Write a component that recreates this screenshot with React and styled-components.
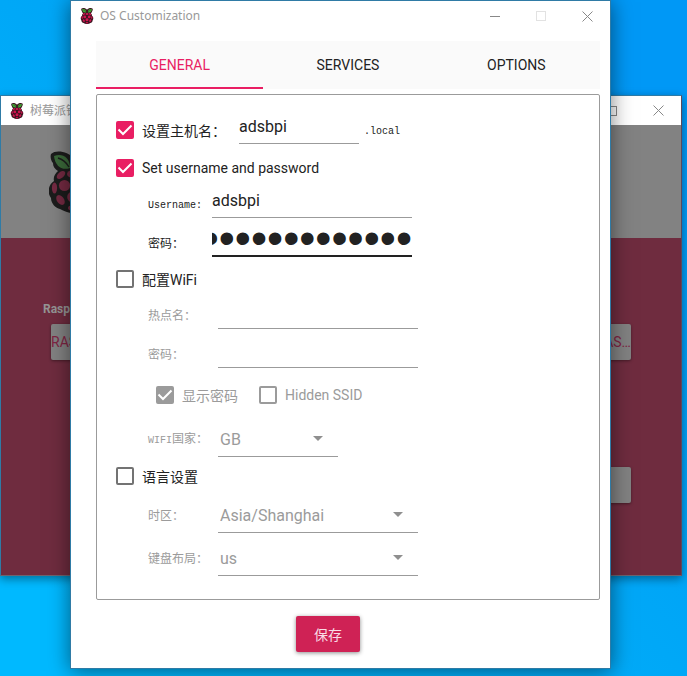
import React, { useState } from "react";
import styled, { createGlobalStyle, css } from "styled-components";

const roboto = '"Roboto", "Noto Sans CJK SC", sans-serif';
const system = '"Noto Sans", "Noto Sans CJK SC", sans-serif';
const mono = '"Liberation Mono", "Noto Sans CJK SC", monospace';

const GlobalStyle = createGlobalStyle`
  *, *::before, *::after { box-sizing: border-box; }
  body { margin: 0; }
  button, input, select { font: inherit; color: inherit; margin: 0; }
`;

const Desktop = styled.main`
  position: relative;
  min-height: 100vh;
  overflow: hidden;
  background: linear-gradient(to top right, #00b9ff 10%, #00a8f7 50%, #0098f6 90%);
  font-family: ${roboto};
  font-size: 14px;
  color: #222;
`;

const Window = styled.section`
  position: absolute;
  border: 1px solid #2f7ba6;
  background: #fff;
`;

const ImagerWindow = styled(Window)`
  top: 95px;
  left: 0;
  right: 5px;
  border-right-color: #5c4a5c;
  border-bottom-color: #6d6470;
  box-shadow: 0 3px 9px rgba(0, 0, 0, 0.4);
`;

const DialogWindow = styled(Window)`
  top: 0;
  left: 70px;
  right: 76px;
  box-shadow: 0 2px 20px rgba(0, 0, 0, 0.5);
`;

const TitleBar = styled.header`
  display: flex;
  align-items: center;
  height: ${(p) => (p.$short ? 29 : 30)}px;
  padding-left: 9px;
  gap: 6px;
  font: 12px/18px ${system};
  color: #999;
`;

const Title = styled.h1`
  flex: 1;
  min-width: 0;
  margin: 0;
  font: inherit;
  white-space: nowrap;
`;

const ControlGroup = styled.div`
  display: flex;
`;

const WindowButton = styled.button`
  display: grid;
  place-items: center;
  width: 46px;
  height: 28px;
  padding: 0;
  border: 0;
  background: none;
  color: ${(p) => (p.disabled ? "#e2e2e2" : "#888")};
`;

const ImagerHeader = styled.div`
  display: flex;
  align-items: center;
  min-height: 113px;
  padding-left: 48px;
  background: #828282;
`;

const ImagerBody = styled.div`
  padding: 64px 42px 72px;
  background: #6f2c3f;
`;

const Columns = styled.div`
  display: grid;
  grid-template-columns: repeat(3, 1fr);
  gap: 24px;
`;

const Column = styled.div`
  display: flex;
  flex-direction: column;
  gap: 8px;
  min-width: 0;
`;

const ColumnTitle = styled.h2`
  margin: 0;
  font: bold 12px/14px ${roboto};
  color: #959595;
  white-space: nowrap;
`;

const DimButton = styled.button`
  display: flex;
  align-items: center;
  justify-content: ${(p) => (p.$end ? "flex-end" : "flex-start")};
  height: 36px;
  margin: 0 8px;
  padding: 0;
  overflow: hidden;
  border: 0;
  border-radius: 2px;
  background: #828282;
  box-shadow: 0 1px 3px rgba(0, 0, 0, 0.4);
  color: #7f2443;
  white-space: nowrap;
`;

const NextRow = styled.div`
  display: flex;
  flex-direction: column;
  width: 50%;
  margin: 107px 0 0 auto;
`;

const DialogContent = styled.div`
  padding: 10px 10px 16px 25px;
`;

const TabBar = styled.div`
  display: grid;
  grid-template-columns: repeat(3, 1fr);
  gap: 1px;
  margin-bottom: 5px;
  background: #fafafa;
`;

const Tab = styled.button`
  height: 48px;
  padding: 2px 0 0;
  border: 0;
  border-bottom: 2px solid ${(p) => (p["aria-selected"] ? "#e91e63" : "transparent")};
  background: none;
  color: ${(p) => (p["aria-selected"] ? "#e91e63" : "#222")};
`;

const Form = styled.form`
  margin: 0;
`;

const Panel = styled.div`
  padding: 21px 19px 23px;
  border: 1px solid #9b9b9b;
  border-radius: 2px;
`;

const HostRow = styled.div`
  display: flex;
  align-items: center;
`;

const Suffix = styled.span`
  margin-left: 5px;
  padding-top: 3px;
  font: 10px/14px ${mono};
`;

const Section = styled.fieldset`
  display: flex;
  flex-direction: column;
  gap: ${(p) => (p.$tight ? 6 : 13)}px;
  min-width: 0;
  margin: ${(p) => p.$above}px 0 0;
  padding: 0;
  border: 0;
`;

const Fields = styled.div`
  display: flex;
  flex-direction: column;
  gap: ${(p) => (p.$tight ? 1 : 11)}px;
  padding-left: 32px;
  color: ${(p) => (p.$muted ? "#9b9b9b" : "#222")};
`;

const FieldRow = styled.div`
  display: grid;
  grid-template-columns: ${(p) => p.$label}px minmax(0, ${(p) => (p.$narrow ? 120 : 200)}px);
  align-items: center;
`;

const FieldLabel = styled.label`
  padding-top: ${(p) => (p.$low ? 8 : 2)}px;
  font: 12px/16px ${system};
  white-space: nowrap;
`;

const Latin = styled.span`
  font: 10px/16px ${mono};
`;

const fieldLine = css`
  border: 0;
  border-bottom: ${(p) => (p.$active ? "2px solid #222" : "1px solid #9b9b9b")};
  border-radius: 0;
  background: none;
  outline: 0;
  width: 100%;
`;

const TextInput = styled.input`
  ${fieldLine}
  height: 28px;
  padding: 0 0 7px;
  font: 16px/20px ${roboto};
`;

const HostInput = styled(TextInput)`
  width: 120px;
  margin-left: 13px;
`;

const PasswordInput = styled(TextInput)`
  padding: 0 0 8px;
  font: 46px/20px "Liberation Sans", sans-serif;
  direction: rtl;
`;

const SelectBox = styled.div`
  display: grid;
  align-items: center;

  & > * { grid-area: 1 / 1; }
  & > svg { justify-self: end; margin: 4px 15px 0 0; pointer-events: none; }
`;

const Select = styled.select`
  ${fieldLine}
  height: 42px;
  padding: 9px 36px 0 2px;
  appearance: none;
  font: 16px/20px ${roboto};
  color: #9b9b9b;
  opacity: 1;
`;

const CheckLabel = styled.label`
  display: inline-flex;
  align-items: center;
  gap: 8px;
  height: 18px;
  white-space: nowrap;
`;

const CheckBox = styled.input`
  appearance: none;
  flex: none;
  width: 18px;
  height: 18px;
  border: 2px solid ${(p) => (p.disabled ? "#9b9b9b" : "#737373")};
  border-radius: 2px;
  background: #fff;

  &:checked {
    border-color: ${(p) => (p.disabled ? "#9b9b9b" : "#e91e63")};
    background: ${(p) => (p.disabled ? "#9b9b9b" : "#e91e63")};
  }
`;

const CheckWrap = styled.span`
  display: grid;
  & > * { grid-area: 1 / 1; }
  & > svg { pointer-events: none; }
`;

const Options = styled.div`
  display: flex;
  gap: 21px;
  padding: 7px 0 0 8px;
`;

const Footer = styled.footer`
  display: flex;
  justify-content: center;
  padding: 16px 40px 0 0;
`;

const SaveButton = styled.button`
  min-width: 64px;
  height: 36px;
  border: 0;
  border-radius: 2px;
  background: #cf2255;
  box-shadow: 0 1px 4px rgba(0, 0, 0, 0.45);
  color: #f9dce5;
`;

function Raspberry({ width, height, leaf, berry, line }) {
  return (
    <svg width={width} height={height} viewBox="0 0 48 62" aria-hidden="true">
      <path
        fill={line}
        d="M24 7C20 1 7-2 2 3c-1 3 0 7 2 9 0 4 2 6 5 8-3 3-5 6-4 10-6 4-7 12-3 17 0 6 5 10 9 11 4 2 8 4 13 4s9-2 13-4c4-1 9-5 9-11 4-5 3-13-3-17 1-4-1-7-4-10 3-2 5-4 5-8 2-2 3-6 2-9C41-2 28 1 24 7Z"
      />
      <g fill={leaf}>
        <path d="M21 17C13 20 6 15 5 5c8-3 16 1 16 12Z" />
        <path d="M27 17C35 20 42 15 43 5c-8-3-16 1-16 12Z" />
      </g>
      <g fill="none" stroke={line} strokeWidth="1.4">
        <path d="M9 7c4 1 8 4 11 9" />
        <path d="M39 7c-4 1-8 4-11 9" />
      </g>
      <g fill={berry}>
        <ellipse cx="24" cy="23" rx="6" ry="4" />
        <ellipse cx="12" cy="24" rx="5" ry="3" transform="rotate(-40 12 24)" />
        <ellipse cx="36" cy="24" rx="5" ry="3" transform="rotate(40 36 24)" />
        <ellipse cx="5.5" cy="37" rx="2.6" ry="5.5" />
        <ellipse cx="42.5" cy="37" rx="2.6" ry="5.5" />
        <circle cx="15.5" cy="34.5" r="5.6" />
        <circle cx="32.5" cy="34.5" r="5.6" />
        <circle cx="24" cy="46" r="5.8" />
        <ellipse cx="11.5" cy="49" rx="3.6" ry="5.4" transform="rotate(-35 11.5 49)" />
        <ellipse cx="36.5" cy="49" rx="3.6" ry="5.4" transform="rotate(35 36.5 49)" />
        <ellipse cx="24" cy="57" rx="5" ry="2.7" />
      </g>
    </svg>
  );
}

function Controls({ fixedSize }) {
  return (
    <ControlGroup>
      <WindowButton type="button" aria-label="Minimize">
        <svg width="11" height="11"><path d="M0 5.5h10" stroke="currentColor" /></svg>
      </WindowButton>
      <WindowButton type="button" aria-label="Maximize" disabled={fixedSize}>
        <svg width="10" height="10">
          <rect x=".5" y=".5" width="9" height="9" fill="none" stroke="currentColor" />
        </svg>
      </WindowButton>
      <WindowButton type="button" aria-label="Close">
        <svg width="11" height="11"><path d="m.5.5 10 10m0-10-10 10" stroke="currentColor" /></svg>
      </WindowButton>
    </ControlGroup>
  );
}

function Check({ label, checked: initial = false, disabled }) {
  const [checked, setChecked] = useState(initial);
  return (
    <CheckLabel>
      <CheckWrap>
        <CheckBox
          type="checkbox"
          checked={checked}
          disabled={disabled}
          onChange={(e) => setChecked(e.target.checked)}
        />
        {checked && (
          <svg width="18" height="18" fill="none" stroke="#fff" strokeWidth="2">
            <path d="m2.500 8.500 4.500 4.500 8.500-8.500" />
          </svg>
        )}
      </CheckWrap>
      {label}
    </CheckLabel>
  );
}

function SelectField({ id, label, value, narrow }) {
  return (
    <FieldRow $label={70} $narrow={narrow}>
      <FieldLabel htmlFor={id} $low>{label}</FieldLabel>
      <SelectBox>
        <Select id={id} disabled defaultValue={value}>
          <option>{value}</option>
        </Select>
        <svg width="10" height="5"><path d="M0 0h10L5 5z" fill="#8f8f8f" /></svg>
      </SelectBox>
    </FieldRow>
  );
}

function ImagerBackground() {
  return (
    <ImagerWindow>
      <TitleBar $short>
        <Raspberry width={14} height={16} leaf="#3faa35" berry="#d01550" line="#3b1620" />
        <Title>树莓派镜像烧录器</Title>
        <Controls />
      </TitleBar>
      <ImagerHeader>
        <Raspberry width={48} height={62} leaf="#3b693a" berry="#742a42" line="#1c1c1c" />
      </ImagerHeader>
      <ImagerBody>
        <Columns>
          <Column>
            <ColumnTitle>Raspberry Pi</ColumnTitle>
            <DimButton type="button">RASPBERRY PI 4</DimButton>
          </Column>
          <Column />
          <Column>
            <ColumnTitle>&nbsp;</ColumnTitle>
            <DimButton type="button" $end>GENERIC MAS…</DimButton>
          </Column>
        </Columns>
        <NextRow>
          <DimButton type="button" aria-label="Next" />
        </NextRow>
      </ImagerBody>
    </ImagerWindow>
  );
}

export default function App() {
  const [tab, setTab] = useState("GENERAL");
  return (
    <Desktop>
      <GlobalStyle />
      <ImagerBackground />
      <DialogWindow role="dialog" aria-label="OS Customization">
        <TitleBar>
          <Raspberry width={14} height={16} leaf="#3faa35" berry="#d01550" line="#3b1620" />
          <Title>OS Customization</Title>
          <Controls fixedSize />
        </TitleBar>
        <DialogContent>
          <TabBar role="tablist">
            {["GENERAL", "SERVICES", "OPTIONS"].map((name) => (
              <Tab
                key={name}
                type="button"
                role="tab"
                aria-selected={tab === name}
                onClick={() => setTab(name)}
              >
                {name}
              </Tab>
            ))}
          </TabBar>
          <Form onSubmit={(e) => e.preventDefault()}>
            <Panel>
              <HostRow>
                <Check label="设置主机名：" checked />
                <HostInput aria-label="主机名" defaultValue="adsbpi" />
                <Suffix>.local</Suffix>
              </HostRow>
              <Section $above={15}>
                <Check label="Set username and password" checked />
                <Fields>
                  <FieldRow $label={64}>
                    <FieldLabel htmlFor="user"><Latin>Username:</Latin></FieldLabel>
                    <TextInput id="user" defaultValue="adsbpi" />
                  </FieldRow>
                  <FieldRow $label={64}>
                    <FieldLabel htmlFor="pass">密码：</FieldLabel>
                    <PasswordInput id="pass" type="password" $active defaultValue="raspberrypi-adsb" />
                  </FieldRow>
                </Fields>
              </Section>
              <Section $above={13}>
                <Check label="配置WiFi" />
                <Fields $muted>
                  <FieldRow $label={70}>
                    <FieldLabel htmlFor="ssid">热点名：</FieldLabel>
                    <TextInput id="ssid" disabled />
                  </FieldRow>
                  <FieldRow $label={70}>
                    <FieldLabel htmlFor="wifipass">密码：</FieldLabel>
                    <TextInput id="wifipass" type="password" disabled />
                  </FieldRow>
                  <Options>
                    <Check label="显示密码" checked disabled />
                    <Check label="Hidden SSID" disabled />
                  </Options>
                  <SelectField id="country" label={<><Latin>WIFI</Latin>国家：</>} value="GB" narrow />
                </Fields>
              </Section>
              <Section $above={10} $tight>
                <Check label="语言设置" />
                <Fields $muted $tight>
                  <SelectField id="zone" label="时区：" value="Asia/Shanghai" />
                  <SelectField id="keyboard" label="键盘布局：" value="us" />
                </Fields>
              </Section>
            </Panel>
            <Footer>
              <SaveButton type="submit">保存</SaveButton>
            </Footer>
          </Form>
        </DialogContent>
      </DialogWindow>
    </Desktop>
  );
}
